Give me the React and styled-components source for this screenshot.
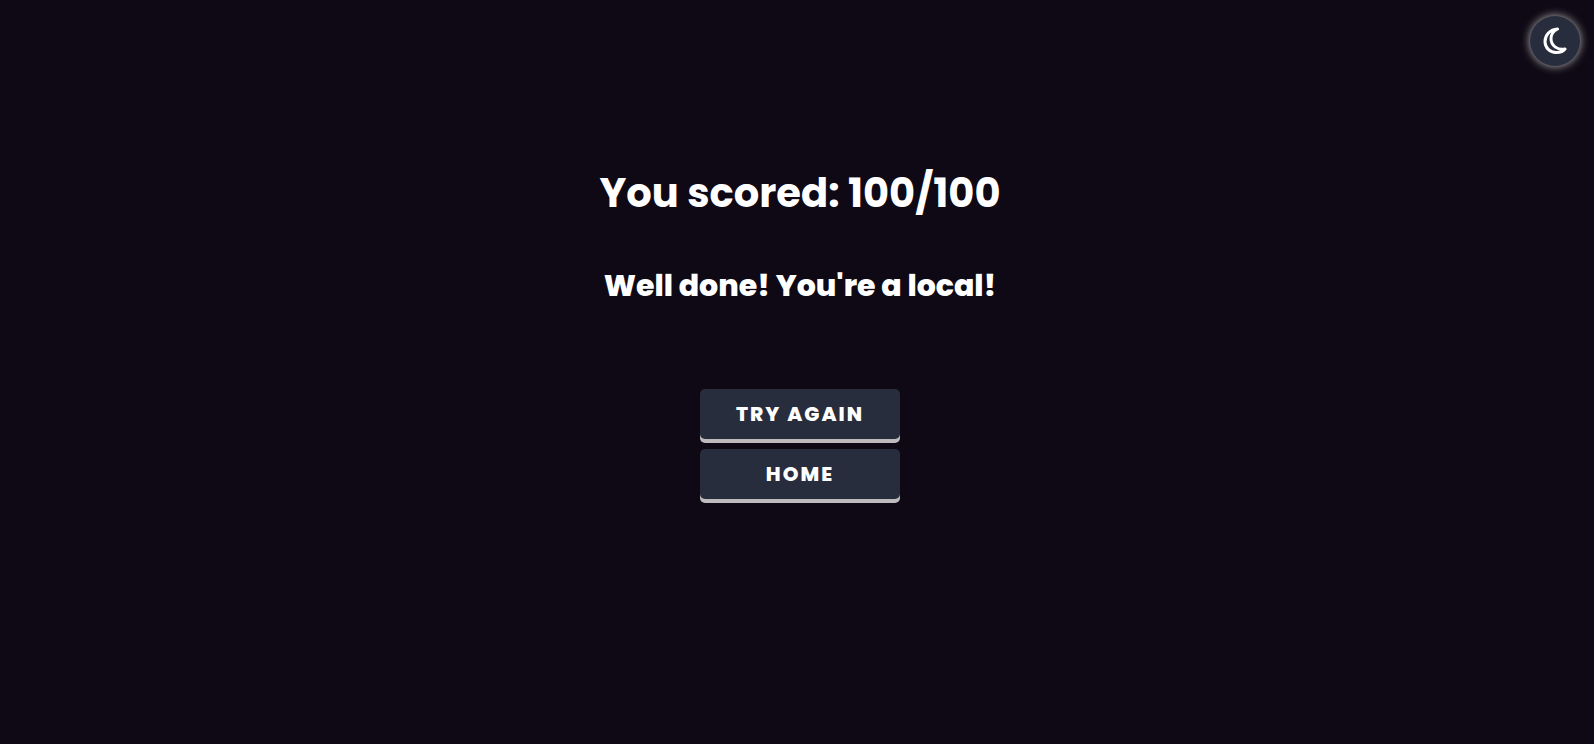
import React from "react";
import styled, { createGlobalStyle } from "styled-components";

const GlobalStyle = createGlobalStyle`
  *, *::before, *::after { box-sizing: border-box; }
  body {
    margin: 0;
    background: #0e0914;
    color: #fff;
    font-family: Poppins, Inter, sans-serif;
  }
`;

const Page = styled.div`
  min-height: 100vh;
  display: flex;
  flex-direction: column;
`;

const Header = styled.header`
  display: flex;
  justify-content: flex-end;
  padding: 16px 14px 0;
`;

const ThemeToggle = styled.button`
  display: grid;
  place-items: center;
  width: 50px;
  height: 50px;
  padding: 0;
  border: 0;
  border-radius: 50%;
  background: #282d3d;
  color: #fff;
  box-shadow: 0 0 10px #bdbbbd;
  cursor: pointer;
`;

const Result = styled.main`
  display: flex;
  flex-direction: column;
  align-items: center;
  padding: 97px 10px 0 16px;
  text-align: center;
`;

const Score = styled.h1`
  margin: 0;
  font-size: 40px;
  font-weight: 700;
  line-height: 60px;
`;

const Message = styled.h2`
  margin: 40px 0 0;
  font-size: 30px;
  font-weight: 800;
  line-height: 46px;
`;

const Actions = styled.div`
  display: flex;
  flex-direction: column;
  gap: 10px;
  margin-top: 80px;
`;

const ActionButton = styled.button`
  width: 200px;
  height: 50px;
  padding: 0;
  border: 0;
  border-radius: 5px;
  background: #282d3d;
  color: #fff;
  box-shadow: 0 4px 0 #bdbbbd;
  font: inherit;
  font-size: 20px;
  font-weight: 800;
  letter-spacing: 2px;
  text-transform: uppercase;
  cursor: pointer;
`;

const MoonIcon = () => (
  <svg width="24" height="28" viewBox="0 0 24 28" fill="none" stroke="currentColor" strokeWidth="3" strokeLinejoin="round" aria-hidden="true">
    <path d="M14.500 2C7 2.500 2 8 2 14.500C2 21 7 25.500 13 25.500C17 25.500 20.500 24.500 22 22C15 23.500 8 19 8 11.500C8 7.500 10.500 4 14.500 2Z" />
  </svg>
);

export default function App() {
  return (
    <>
      <GlobalStyle />
      <Page>
        <Header>
          <ThemeToggle type="button" aria-label="Toggle theme">
            <MoonIcon />
          </ThemeToggle>
        </Header>
        <Result>
          <Score>You scored: 100/100</Score>
          <Message>Well done! You're a local!</Message>
          <Actions>
            <ActionButton type="button">Try again</ActionButton>
            <ActionButton type="button">Home</ActionButton>
          </Actions>
        </Result>
      </Page>
    </>
  );
}
